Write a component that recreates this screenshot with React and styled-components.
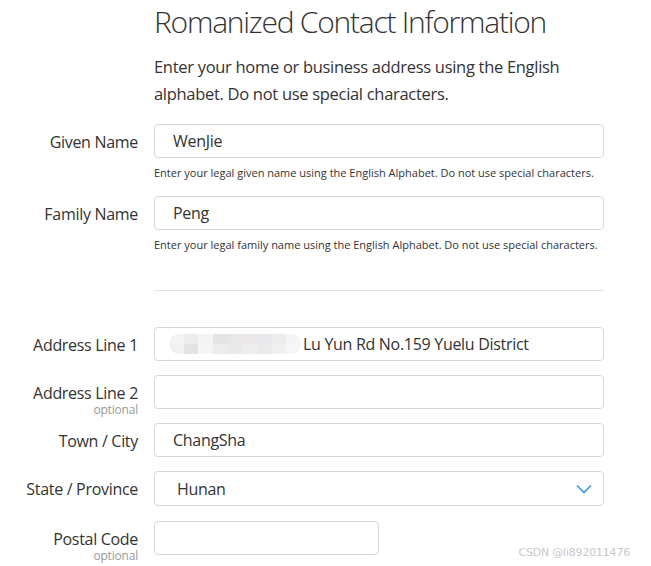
import React from 'react';
import styled, { createGlobalStyle } from 'styled-components';

const GlobalStyle = createGlobalStyle`
  html, body {
    margin: 0;
    padding: 0;
    background: #fff;
  }
  body {
    font-family: 'Open Sans', 'Liberation Sans', sans-serif;
    color: #333;
  }
`;

const Page = styled.div`
  position: relative;
  width: 651px;
  height: 566px;
  overflow: hidden;
`;

const Header = styled.div`
  padding: 2px 0 0 154px;
`;

const Title = styled.h1`
  margin: 0;
  font-size: 30px;
  font-weight: 300;
  line-height: 40px;
  color: #333;
  letter-spacing: -1.25px;
`;

const Intro = styled.p`
  margin: 11px 0 0;
  font-size: 16.5px;
  line-height: 27px;
  width: 420px;
  color: #333;
  letter-spacing: -0.3px;
`;

const Form = styled.div`
  display: flex;
  flex-direction: column;
  margin-top: ${p => p.$top || 0}px;
`;

const Row = styled.div`
  display: grid;
  grid-template-columns: 138px 450px;
  column-gap: 16px;
  align-items: start;
  margin-bottom: ${p => p.$gap ?? 14}px;
`;

const LabelCell = styled.div`
  box-sizing: border-box;
  height: 34px;
  display: flex;
  flex-direction: column;
  align-items: flex-end;
  padding-top: 8px;
`;

const Label = styled.label`
  font-size: 16px;
  line-height: 20px;
  color: #333;
  letter-spacing: -0.3px;
  white-space: nowrap;
`;

const Optional = styled.span`
  font-size: 12px;
  line-height: 12px;
  margin-top: 1px;
  color: #999;
  letter-spacing: -0.2px;
`;

const Field = styled.div`
  display: flex;
  flex-direction: column;
`;

const Box = styled.div`
  position: relative;
  box-sizing: border-box;
  width: ${p => p.$width || 450}px;
  height: ${p => p.$height || 34}px;
  border: 1px solid #d6d6d6;
  border-radius: 4px;
  display: flex;
  align-items: center;
  padding-left: ${p => p.$indent || 18}px;
  font-size: 16px;
  color: #333;
  letter-spacing: -0.3px;
  background: #fff;
`;

const Help = styled.div`
  font-size: 11px;
  line-height: 14px;
  color: #333;
  margin-top: 8px;
  letter-spacing: 0;
  white-space: nowrap;
`;

const Divider = styled.hr`
  margin: 38px 0 36px 154px;
  width: 450px;
  border: none;
  border-top: 1px solid #e0e0e0;
`;

const Blur = styled.span`
  display: inline-grid;
  grid-template-columns: repeat(9, 1fr);
  grid-template-rows: repeat(2, 1fr);
  width: 132px;
  height: 20px;
  border-radius: 10px;
  overflow: hidden;
  margin-left: -4px;
  margin-right: 2px;
`;

const BlurCell = styled.span`
  background: ${p => p.$c};
`;

const Chevron = styled.svg`
  position: absolute;
  right: 11px;
  top: 12px;
`;

const Watermark = styled.div`
  position: absolute;
  right: 21px;
  bottom: 7px;
  font-family: 'DejaVu Sans', sans-serif;
  font-size: 11px;
  color: #c8c8c8;
  letter-spacing: -0.2px;
`;

const blurColors = [
  '#f3f3f3', '#ececec', '#f4f4f4', '#e4e4e4', '#e8e8e8', '#ebe7e6', '#e6e8ec', '#ececec', '#f4f4f4',
  '#f1f1f1', '#e3e3e3', '#f5f5f5', '#ececec', '#e9e9e9', '#eeeeee', '#eaeaea', '#f0f0f0', '#f6f6f6',
];

export default function App() {
  return (
    <Page>
      <GlobalStyle />
      <Header>
        <Title>Romanized Contact Information</Title>
        <Intro>Enter your home or business address using the English alphabet. Do not use special characters.</Intro>
      </Header>

      <Form $top={17}>
        <Row $gap={16}>
          <LabelCell><Label>Given Name</Label></LabelCell>
          <Field>
            <Box>WenJie</Box>
            <Help>Enter your legal given name using the English Alphabet. Do not use special characters.</Help>
          </Field>
        </Row>
        <Row $gap={0}>
          <LabelCell><Label>Family Name</Label></LabelCell>
          <Field>
            <Box>Peng</Box>
            <Help>Enter your legal family name using the English Alphabet. Do not use special characters.</Help>
          </Field>
        </Row>
      </Form>

      <Divider />

      <Form>
        <Row>
          <LabelCell><Label>Address Line 1</Label></LabelCell>
          <Box>
            <Blur>
              {blurColors.map((c, i) => <BlurCell key={i} $c={c} />)}
            </Blur>
            Lu Yun Rd No.159 Yuelu District
          </Box>
        </Row>
        <Row>
          <LabelCell>
            <Label>Address Line 2</Label>
            <Optional>optional</Optional>
          </LabelCell>
          <Box />
        </Row>
        <Row>
          <LabelCell><Label>Town / City</Label></LabelCell>
          <Box>ChangSha</Box>
        </Row>
        <Row $gap={15}>
          <LabelCell><Label>State / Province</Label></LabelCell>
          <Box $height={35} $indent={22}>
            Hunan
            <Chevron width="16" height="10" viewBox="0 0 16 10">
              <path d="M1 1.5 L8 8.5 L15 1.5" fill="none" stroke="#3a9ad9" strokeWidth="1.6" />
            </Chevron>
          </Box>
        </Row>
        <Row>
          <LabelCell>
            <Label>Postal Code</Label>
            <Optional>optional</Optional>
          </LabelCell>
          <Box $width={225} />
        </Row>
      </Form>

      <Watermark>CSDN @li892011476</Watermark>
    </Page>
  );
}
